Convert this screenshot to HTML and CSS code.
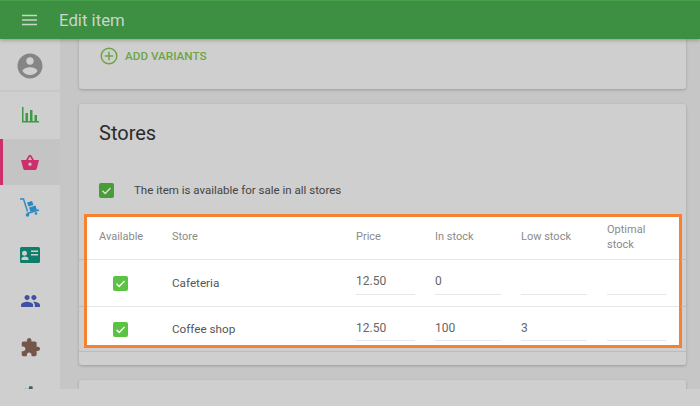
FILE: index.html
```html
<!DOCTYPE html>
<html lang="en">
<head>
<meta charset="utf-8">
<title>Edit item</title>
<link rel="stylesheet" href="styles.css">
</head>
<body>
<header class="topbar">
  <svg class="menu" viewBox="0 0 16 12" width="15" height="12"><path d="M0 1.2h16M0 6h16M0 10.800h16" stroke="currentColor" stroke-width="1.5"/></svg>
  <h1 class="title">Edit item</h1>
</header>
<div class="frame">
  <nav class="sidebar">
    <div class="nav-item nav-user"><svg viewBox="0 0 24 24" width="30" height="30" class="i-user"><path d="M12 2C6.480 2 2 6.480 2 12s4.480 10 10 10 10-4.480 10-10S17.520 2 12 2zm0 3c1.660 0 3 1.340 3 3s-1.340 3-3 3-3-1.340-3-3 1.340-3 3-3zm0 14.200c-2.500 0-4.710-1.280-6-3.220.030-1.990 4-3.080 6-3.080 1.990 0 5.970 1.090 6 3.080-1.290 1.940-3.500 3.220-6 3.220z"/></svg></div>
    <div class="nav-item"><svg viewBox="0 0 18 16" width="18" height="16" class="i-chart"><path d="M1 0h1.500v14H18v1.500H1zM4.500 6H7v8H4.500zM9 3h2.500v11H9zM13.500 8H16v6h-2.500z"/></svg></div>
    <div class="nav-item nav-active"><svg viewBox="0 0 18 16" width="18" height="16" class="i-basket"><path d="M5 6 8 1h2l3 5h5l-2.200 8.500c-.2.800-.8 1.500-1.800 1.500H4c-1 0-1.600-.7-1.800-1.500L0 6zm2 0h4L9 2.500zM9 8.500a1.700 1.700 0 1 0 0 3.400 1.700 1.700 0 0 0 0-3.400z"/></svg></div>
    <div class="nav-item"><svg viewBox="0 0 20 20" width="20" height="20" class="i-dolly"><path d="M0 1h3.500l4 12.500" fill="none" stroke="currentColor" stroke-width="1.400"/><path d="M7 4.500l5-1.500 1.500 4-5 1.500zM9 9.500l6.500-2 1.500 4.500-6.500 2z"/><path d="M7 15.500l12-3.500" fill="none" stroke="currentColor" stroke-width="1.400"/><circle cx="7.500" cy="17" r="1.800"/><circle cx="16" cy="15.500" r="1.300"/></svg></div>
    <div class="nav-item"><svg viewBox="0 0 20 16" width="20" height="16" class="i-card"><path d="M1.500 0h17A1.500 1.500 0 0 1 20 1.500v13a1.500 1.500 0 0 1-1.500 1.500h-17A1.500 1.500 0 0 1 0 14.500v-13A1.500 1.500 0 0 1 1.500 0zM7 6.200a2.500 2.500 0 1 0-5 0 2.500 2.500 0 0 0 5 0zM1.500 13h7v-1.300c0-1.600-2.300-2.300-3.500-2.300s-3.500.7-3.500 2.300zM11 3.500V5h7V3.500zM11 7v1.500h7V7z"/></svg></div>
    <div class="nav-item"><svg viewBox="1 5 22 14" width="19" height="12" class="i-people"><path d="M16 11c1.660 0 2.990-1.340 2.990-3S17.660 5 16 5c-1.660 0-3 1.340-3 3s1.340 3 3 3zm-8 0c1.660 0 2.990-1.340 2.990-3S9.660 5 8 5C6.340 5 5 6.340 5 8s1.340 3 3 3zm0 2c-2.330 0-7 1.170-7 3.500V19h14v-2.500c0-2.330-4.670-3.500-7-3.500zm8 0c-.29 0-.62.020-.97.050 1.160.84 1.970 1.970 1.970 3.450V19h6v-2.500c0-2.330-4.670-3.500-7-3.500z"/></svg></div>
    <div class="nav-item"><svg viewBox="0 0 24 24" width="21" height="21" class="i-puzzle"><path d="M20.500 11H19V7c0-1.100-.9-2-2-2h-4V3.500C13 2.120 11.880 1 10.500 1S8 2.120 8 3.500V5H4c-1.100 0-1.990.9-1.990 2v3.800H3.500c1.490 0 2.700 1.210 2.700 2.700s-1.210 2.700-2.700 2.700H2V20c0 1.100.9 2 2 2h3.800v-1.500c0-1.490 1.210-2.700 2.700-2.700 1.490 0 2.700 1.210 2.700 2.700V22H17c1.100 0 2-.9 2-2v-4h1.500c1.380 0 2.500-1.120 2.500-2.500S21.880 11 20.500 11z"/></svg></div>
    <div class="nav-item"><svg viewBox="0 0 24 24" width="20" height="20" class="i-gear"><path d="M19.400 13c.04-.32.060-.65.060-1s-.02-.68-.06-1l2.100-1.650-2-3.460-2.480 1a7.300 7.300 0 0 0-1.730-1L15 2.700h-4l-.38 2.650a7.300 7.300 0 0 0-1.730 1l-2.480-1-2 3.460L6.500 11c-.04.32-.06.65-.06 1s.02.68.06 1l-2.100 1.650 2 3.460 2.480-1c.53.4 1.110.74 1.730 1L11 21.300h4l.38-2.650a7.300 7.300 0 0 0 1.730-1l2.480 1 2-3.460z"/></svg></div>
  </nav>
  <main class="content">
    <section class="card card-variants">
      <div class="add-variants">
        <svg viewBox="0 0 18 18" width="18" height="18"><circle cx="9" cy="9" r="7.800" fill="none" stroke="currentColor" stroke-width="1.500"/><path d="M9 4.800v8.400M4.800 9h8.400" stroke="currentColor" stroke-width="1.500"/></svg>
        <span>ADD VARIANTS</span>
      </div>
    </section>
    <section class="card card-stores">
      <h2 class="card-title">Stores</h2>
      <div class="all-stores">
        <span class="check check-dim"><svg viewBox="0 0 15 15" width="15" height="15"><path d="M3.500 7.800l2.700 2.700 5.300-5.500" fill="none" stroke="currentColor" stroke-width="1.300"/></svg></span>
        <span>The item is available for sale in all stores</span>
      </div>
      <div class="highlight">
        <div class="row row-head">
          <div>Available</div><div>Store</div><div>Price</div><div>In stock</div><div>Low stock</div><div class="head-narrow">Optimal stock</div>
        </div>
        <div class="row">
          <div class="cell-check"><span class="check"><svg viewBox="0 0 15 15" width="15" height="15"><path d="M3.500 7.800l2.700 2.700 5.300-5.500" fill="none" stroke="currentColor" stroke-width="1.300"/></svg></span></div>
          <div class="cell-name">Cafeteria</div>
          <div class="field">12.50</div><div class="field">0</div><div class="field"></div><div class="field"></div>
        </div>
        <div class="row row-last">
          <div class="cell-check"><span class="check"><svg viewBox="0 0 15 15" width="15" height="15"><path d="M3.500 7.800l2.700 2.700 5.300-5.500" fill="none" stroke="currentColor" stroke-width="1.300"/></svg></span></div>
          <div class="cell-name">Coffee shop</div>
          <div class="field">12.50</div><div class="field">100</div><div class="field">3</div><div class="field"></div>
        </div>
      </div>
      <div class="card-rule"></div>
    </section>
    <section class="card card-next"></section>
  </main>
</div>
<div class="bottom-strip"></div>
</body>
</html>
```
FILE: styles.css
```css
* { box-sizing: border-box; }
html, body { margin: 0; padding: 0; }
body {
  width: 700px;
  height: 406px;
  overflow: hidden;
  background: #cfcfcf;
  font-family: Roboto, "Liberation Sans", sans-serif;
  color: #3a3a3a;
  display: flex;
  flex-direction: column;
}
.topbar {
  height: 39px;
  flex: none;
  background: #3d8f41;
  border-top: 1px solid #46a04a;
  color: #c9d6ca;
  display: flex;
  align-items: center;
  padding-left: 22px;
  box-shadow: 0 1px 4px rgba(0,0,0,.3);
  position: relative;
  z-index: 2;
}
.menu { flex: none; }
.title { margin: 0 0 0 22px; font-size: 16.800px; font-weight: 400; }
.frame {
  height: 350px;
  flex: none;
  display: flex;
  overflow: hidden;
  background: #c6c6c6;
}
.sidebar {
  width: 60px;
  flex: none;
  background: #cfcfcf;
  display: flex;
  flex-direction: column;
}
.nav-item {
  height: 46.500px;
  flex: none;
  display: flex;
  align-items: center;
  justify-content: center;
}
.nav-user { height: 53px; border-bottom: 2px solid #c8c8c8; padding-top: 3px; }
.nav-active { background: #c4c4c4; box-shadow: inset 3px 0 0 #cc2f6c; }
.i-user { fill: #858585; }
.i-chart { fill: #3f9a45; }
.i-basket { fill: #cc2f6c; }
.i-dolly { fill: #2a8ac4; color: #2a8ac4; }
.i-card { fill: #0f7d6c; }
.i-people { fill: #3f51a0; }
.i-puzzle { fill: #74564a; }
.i-gear { fill: #43606e; }
.content {
  flex: 1;
  padding: 0 14px 0 19px;
  display: flex;
  flex-direction: column;
  gap: 15px;
  min-width: 0;
}
.card {
  flex: none;
  background: #cfcfcf;
  border-radius: 3px;
  box-shadow: 0 1px 3px rgba(0,0,0,.22);
}
.card-variants { height: 50px; border-radius: 0 0 3px 3px; padding: 8px 0 0 21px; }
.add-variants {
  display: flex;
  align-items: center;
  gap: 7px;
  color: #6ea544;
  font-size: 11.700px;
  font-weight: 500;
}
.card-stores { height: 261px; padding-top: 17px; }
.card-title { margin: 0 0 0 20px; font-size: 20px; font-weight: 400; line-height: 24px; color: #2b2b2b; }
.all-stores {
  margin: 37px 0 0 20px;
  display: flex;
  align-items: center;
  gap: 20px;
  font-size: 11.500px;
  height: 16px;
  color: #444;
}
.check {
  width: 15px;
  height: 15px;
  flex: none;
  border-radius: 2px;
  background: #5bc244;
  color: #fff;
  display: inline-flex;
}
.check-dim { background: #4a9c38; color: #d5e8d0; }
.highlight {
  margin: 16px 4px 0 5px;
  height: 134px;
  background: #fff;
  border: 3px solid #f58233;
}
.row {
  display: grid;
  grid-template-columns: 73px 184px 79px 86px 86px 79px;
  height: 47px;
  position: relative;
  padding-left: 12px;
  border-bottom: 1px solid #e7e7e7;
  font-size: 11.700px;
  color: #555;
}
.row::before, .row::after {
  content: "";
  position: absolute;
  bottom: -1px;
  height: 1px;
  width: 5px;
  background: #bcbcbc;
}
.row::before { left: -8px; }
.row::after { right: -7px; }
.row-head {
  height: 43px;
  align-items: center;
  padding-bottom: 4px;
  font-size: 11px;
  color: #8a8a8a;
  line-height: 15px;
}
.head-narrow { width: 50px; padding-top: 2px; }
.row-last { border-bottom: 0; height: 41px; }
.row-last::before, .row-last::after { display: none; }
.cell-check { display: flex; align-items: center; padding-left: 14px; }
.cell-name { display: flex; align-items: center; }
.row-last .cell-check { padding-top: 4px; }
.row-last .cell-name { padding-top: 3px; }
.field {
  height: 35px;
  margin-right: 20px;
  border-bottom: 1px solid #e7e7e7;
  padding-top: 13px;
  line-height: 16px;
  font-size: 12px;
  color: #666;
}
.row-last .field { height: 34px; }
.card-rule { height: 1px; background: #bcbcbc; margin-top: 3px; }
.card-next { height: 40px; }
.bottom-strip { flex: 1; background: #cfcfcf; position: relative; z-index: 1; }
```
